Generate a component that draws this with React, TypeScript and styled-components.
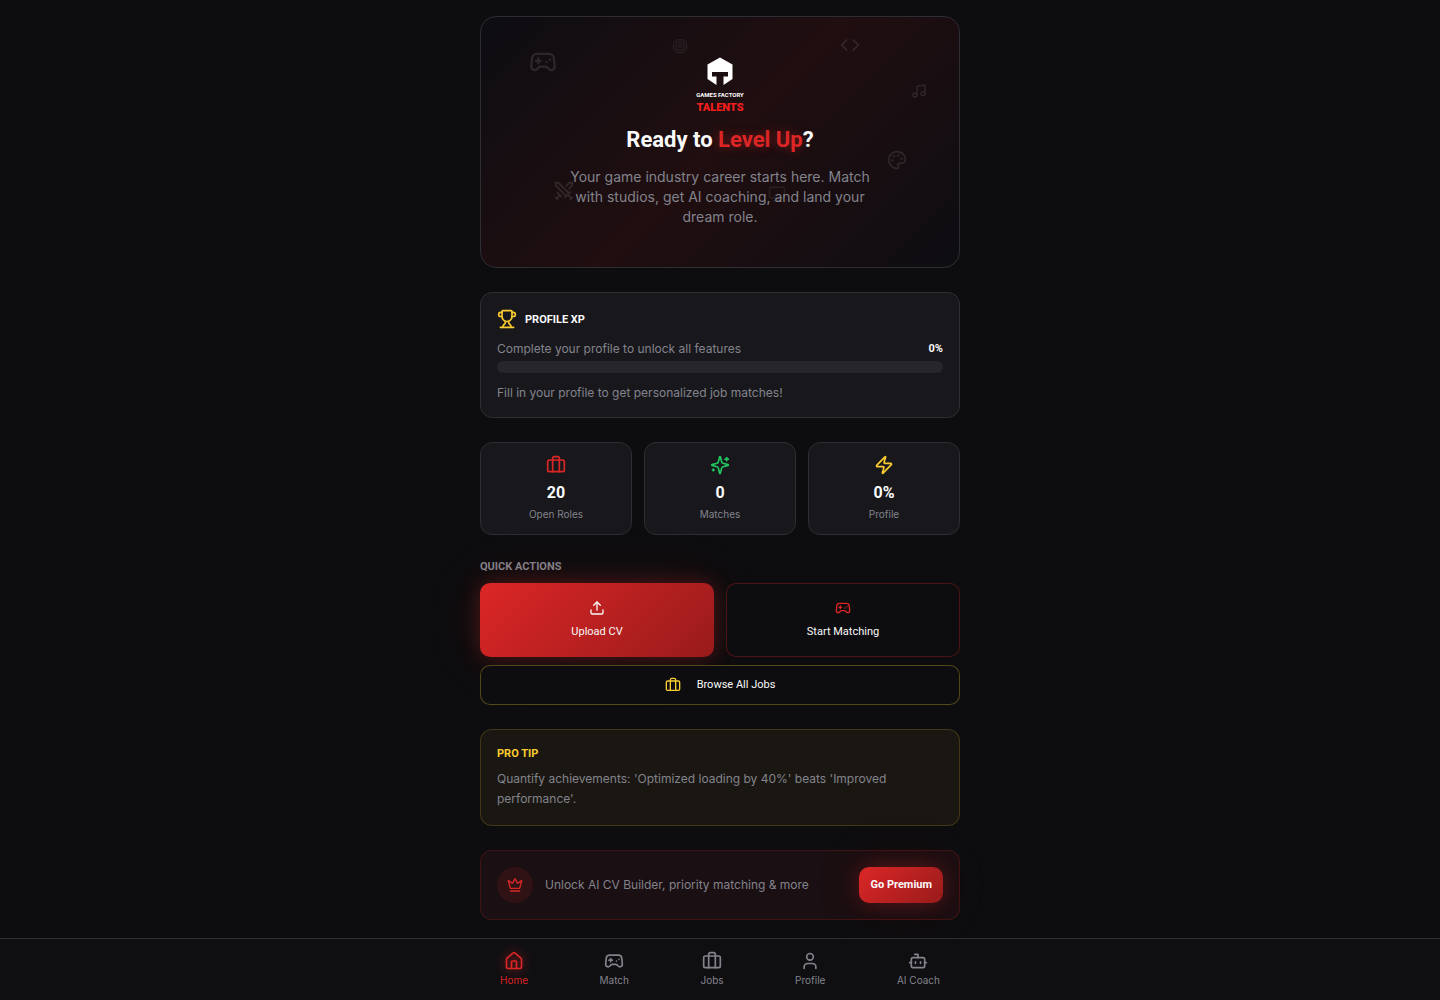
import React from "react";
import styled, { createGlobalStyle, css } from "styled-components";
import {
  Bot,
  Briefcase,
  Code,
  Crown,
  Gamepad2,
  House,
  Monitor,
  Music,
  Palette,
  Swords,
  Target,
  Trophy,
  Upload,
  User,
  Zap,
} from "lucide-react";

const color = {
  bg: "#0d0d0f",
  card: "#18181c",
  line: "#2d2d33",
  track: "#27272b",
  text: "#fafafa",
  muted: "#83838c",
  red: "#dc2626",
  redDark: "#991b1b",
  gold: "#facc30",
  green: "#22c55e",
};

const display = css`
  font-family: Roboto, "Liberation Sans", sans-serif;
`;

const GlobalStyle = createGlobalStyle`
  *, *::before, *::after { box-sizing: border-box; }
  body {
    margin: 0;
    background: ${color.bg};
    color: ${color.text};
    font-family: Inter, "Liberation Sans", sans-serif;
    font-size: 12px;
    line-height: 16px;
  }
  h1, h2, p { margin: 0; }
  button { font: inherit; color: inherit; cursor: pointer; }
`;

const Page = styled.div`
  display: flex;
  flex-direction: column;
  min-height: 100vh;
`;

const Main = styled.main`
  flex: 1;
  display: flex;
  flex-direction: column;
  gap: 24px;
  width: 100%;
  max-width: 480px;
  margin: 0 auto;
  padding: 16px 0;
`;

const Hero = styled.section`
  position: relative;
  display: flex;
  flex-direction: column;
  align-items: center;
  gap: 12px;
  padding: 40px 24px;
  border: 1px solid ${color.line};
  border-radius: 16px;
  overflow: hidden;
  text-align: center;
  background: linear-gradient(135deg, #0d0d12 0%, #200e10 50%, #0d0d12 100%);
`;

const Floating = styled.span<{ $x: string; $y: string; $faint?: boolean }>`
  position: absolute;
  left: ${(p) => p.$x};
  top: ${(p) => p.$y};
  display: flex;
  color: #fff;
  opacity: ${(p) => (p.$faint ? 0.07 : 0.1)};
`;

const Logo = styled.svg`
  position: relative;
  width: 56px;
  height: 56px;
`;

const HeroTitle = styled.h1`
  ${display}
  position: relative;
  font-size: 22px;
  line-height: 30px;
  font-weight: 700;
`;

const Glow = styled.span`
  color: ${color.red};
  text-shadow: 0 0 10px rgba(220, 38, 38, 0.5);
`;

const HeroText = styled.p`
  position: relative;
  max-width: 320px;
  font-size: 14px;
  line-height: 20px;
  color: ${color.muted};
`;

const Card = styled.section`
  padding: 16px;
  border: 1px solid ${color.line};
  border-radius: 12px;
  background: ${color.card};
`;

const CardHeader = styled.div`
  display: flex;
  align-items: center;
  gap: 8px;
  margin-bottom: 12px;
  color: ${color.gold};
`;

const CardTitle = styled.h2<{ $gold?: boolean }>`
  ${display}
  font-size: 11px;
  line-height: 15px;
  font-weight: 700;
  text-transform: uppercase;
  color: ${(p) => (p.$gold ? color.gold : color.text)};
`;

const Muted = styled.p`
  color: ${color.muted};
`;

const ProgressRow = styled.div`
  display: flex;
  justify-content: space-between;
  margin-bottom: 4px;
`;

const Percent = styled.span`
  ${display}
  font-size: 11px;
  font-weight: 700;
`;

const Track = styled.div`
  height: 12px;
  margin-bottom: 12px;
  border-radius: 6px;
  overflow: hidden;
  background: ${color.track};
`;

const Fill = styled.div`
  height: 100%;
  background: ${color.red};
`;

const Stats = styled.section`
  display: grid;
  grid-template-columns: repeat(3, 1fr);
  gap: 12px;
`;

const Stat = styled.div<{ $color: string }>`
  display: flex;
  flex-direction: column;
  align-items: center;
  padding: 12px;
  border: 1px solid ${color.line};
  border-radius: 12px;
  background: ${color.card};
  svg { color: ${(p) => p.$color}; }
`;

const StatValue = styled.strong`
  ${display}
  margin-top: 4px;
  font-size: 16px;
  line-height: 28px;
  font-weight: 700;
`;

const StatLabel = styled.span`
  font-size: 10px;
  line-height: 15px;
  color: ${color.muted};
`;

const Actions = styled.section`
  display: flex;
  flex-direction: column;
  gap: 8px;
`;

const SectionTitle = styled.h2`
  ${display}
  font-size: 11px;
  line-height: 16px;
  font-weight: 700;
  text-transform: uppercase;
  color: ${color.muted};
`;

const ActionGrid = styled.div`
  display: grid;
  grid-template-columns: repeat(2, 1fr);
  gap: 12px;
`;

const ActionButton = styled.button<{ $kind: "primary" | "red" | "gold" }>`
  ${display}
  display: flex;
  flex-direction: ${(p) => (p.$kind === "gold" ? "row" : "column")};
  align-items: center;
  justify-content: center;
  gap: ${(p) => (p.$kind === "gold" ? 16 : 8)}px;
  padding: ${(p) => (p.$kind === "gold" ? "11px 16px" : "16px")};
  border: 1px solid transparent;
  border-radius: 10px;
  font-size: 11px;
  line-height: 16px;
  font-weight: 400;
  background: ${color.bg};
  ${(p) =>
    p.$kind === "primary" &&
    css`
      background: linear-gradient(135deg, ${color.red}, ${color.redDark}) border-box;
      box-shadow: 0 0 20px rgba(220, 38, 38, 0.3), 0 0 60px rgba(220, 38, 38, 0.1);
    `}
  ${(p) =>
    p.$kind === "red" &&
    css`
      border-color: rgba(220, 38, 38, 0.3);
      svg { color: ${color.red}; }
    `}
  ${(p) =>
    p.$kind === "gold" &&
    css`
      border-color: rgba(250, 204, 48, 0.3);
      svg { color: ${color.gold}; }
    `}
`;

const Tip = styled(Card)`
  display: flex;
  flex-direction: column;
  gap: 8px;
  border-color: rgba(250, 204, 48, 0.18);
  background: #1a1712;
`;

const TipText = styled(Muted)`
  line-height: 20px;
`;

const Premium = styled(Card)`
  display: flex;
  align-items: center;
  gap: 12px;
  border-color: rgba(220, 38, 38, 0.2);
  background: #1a0f12;
`;

const CrownBadge = styled.span`
  display: flex;
  align-items: center;
  justify-content: center;
  width: 36px;
  height: 36px;
  border-radius: 50%;
  color: ${color.red};
  background: rgba(220, 38, 38, 0.12);
`;

const PremiumText = styled(Muted)`
  flex: 1;
`;

const PremiumButton = styled.button`
  ${display}
  height: 36px;
  padding: 0 11px;
  border: 0;
  border-radius: 10px;
  font-size: 11px;
  font-weight: 700;
  background: linear-gradient(135deg, ${color.red}, ${color.redDark});
  box-shadow: 0 0 20px rgba(220, 38, 38, 0.3), 0 0 60px rgba(220, 38, 38, 0.1);
`;

const NavBar = styled.nav`
  position: sticky;
  bottom: 0;
  border-top: 1px solid ${color.line};
  background: #0f0f12;
`;

const NavInner = styled.div`
  display: flex;
  justify-content: space-between;
  max-width: 480px;
  margin: 0 auto;
  padding: 0 8px;
`;

const NavLink = styled.a<{ $active?: boolean }>`
  display: flex;
  flex-direction: column;
  align-items: center;
  gap: 2px;
  padding: 12px;
  font-size: 10px;
  line-height: 15px;
  text-decoration: none;
  color: ${(p) => (p.$active ? color.red : color.muted)};
  svg {
    filter: ${(p) => (p.$active ? "drop-shadow(0 0 6px rgba(220, 38, 38, 0.8))" : "none")};
  }
`;

function Sparkles({ size }: { size: number }) {
  return (
    <svg
      width={size}
      height={size}
      viewBox="0 0 24 24"
      fill="none"
      stroke="currentColor"
      strokeWidth="2"
      strokeLinecap="round"
      strokeLinejoin="round"
      aria-hidden="true"
    >
      <path d="M9.937 15.500A2 2 0 0 0 8.500 14.063l-6.135-1.582a.5.5 0 0 1 0-.962L8.500 9.936A2 2 0 0 0 9.937 8.500l1.582-6.135a.5.5 0 0 1 .963 0L14.063 8.500A2 2 0 0 0 15.500 9.937l6.135 1.581a.5.5 0 0 1 0 .964L15.500 14.063a2 2 0 0 0-1.437 1.437l-1.582 6.135a.5.5 0 0 1-.963 0z" />
      <path d="M20 3v4" />
      <path d="M22 5h-4" />
      <path d="M4 17v2" />
      <path d="M5 18H3" />
    </svg>
  );
}

const floating = [
  { Icon: Gamepad2, size: 28, x: "10%", y: "12.5%" },
  { Icon: Target, size: 16, x: "40%", y: "8.5%", faint: true },
  { Icon: Code, size: 20, x: "75%", y: "7%" },
  { Icon: Music, size: 16, x: "90%", y: "26.5%" },
  { Icon: Palette, size: 20, x: "85%", y: "53%" },
  { Icon: Swords, size: 22, x: "15%", y: "65%" },
  { Icon: Monitor, size: 18, x: "60%", y: "67%", faint: true },
];

const stats = [
  { Icon: Briefcase, value: "20", label: "Open Roles", color: color.red },
  { Icon: Sparkles, value: "0", label: "Matches", color: color.green },
  { Icon: Zap, value: "0%", label: "Profile", color: color.gold },
];

const links = [
  { Icon: House, label: "Home", active: true },
  { Icon: Gamepad2, label: "Match" },
  { Icon: Briefcase, label: "Jobs" },
  { Icon: User, label: "Profile" },
  { Icon: Bot, label: "AI Coach" },
];

const progress = 0;

export default function App() {
  return (
    <Page>
      <GlobalStyle />
      <Main>
        <Hero>
          {floating.map(({ Icon, size, x, y, faint }) => (
            <Floating key={x} $x={x} $y={y} $faint={faint} aria-hidden="true">
              <Icon size={size} />
            </Floating>
          ))}
          <Logo viewBox="0 0 56 56" role="img" aria-label="Games Factory Talents">
            <path
              d="M28 0.500 40.500 7.500V22L31.500 28V19.500H36V15H20V19.500H24.500V28L15.500 22V7.500Z"
              fill="#fff"
            />
            <text x="28" y="40" textAnchor="middle" fontFamily="Roboto, sans-serif" fontWeight="700" fontSize="6" fill="#fff">
              GAMES FACTORY
            </text>
            <text x="28" y="54" textAnchor="middle" fontFamily="Roboto, sans-serif" fontWeight="900" fontSize="11" fill="#f21d1d">
              TALENTS
            </text>
          </Logo>
          <HeroTitle>
            Ready to <Glow>Level Up</Glow>?
          </HeroTitle>
          <HeroText>
            Your game industry career starts here. Match with studios, get AI coaching, and land your dream role.
          </HeroText>
        </Hero>

        <Card>
          <CardHeader>
            <Trophy size={20} />
            <CardTitle>Profile XP</CardTitle>
          </CardHeader>
          <ProgressRow>
            <Muted>Complete your profile to unlock all features</Muted>
            <Percent>{progress}%</Percent>
          </ProgressRow>
          <Track role="progressbar" aria-label="Profile XP" aria-valuenow={progress} aria-valuemin={0} aria-valuemax={100}>
            <Fill style={{ width: `${progress}%` }} />
          </Track>
          <Muted>Fill in your profile to get personalized job matches!</Muted>
        </Card>

        <Stats>
          {stats.map(({ Icon, value, label, color: tint }) => (
            <Stat key={label} $color={tint}>
              <Icon size={20} />
              <StatValue>{value}</StatValue>
              <StatLabel>{label}</StatLabel>
            </Stat>
          ))}
        </Stats>

        <Actions>
          <SectionTitle>Quick Actions</SectionTitle>
          <ActionGrid>
            <ActionButton type="button" $kind="primary">
              <Upload size={16} />
              Upload CV
            </ActionButton>
            <ActionButton type="button" $kind="red">
              <Gamepad2 size={16} />
              Start Matching
            </ActionButton>
          </ActionGrid>
          <ActionButton type="button" $kind="gold">
            <Briefcase size={16} />
            Browse All Jobs
          </ActionButton>
        </Actions>

        <Tip>
          <CardTitle $gold>Pro Tip</CardTitle>
          <TipText>Quantify achievements: 'Optimized loading by 40%' beats 'Improved performance'.</TipText>
        </Tip>

        <Premium>
          <CrownBadge>
            <Crown size={16} />
          </CrownBadge>
          <PremiumText>Unlock AI CV Builder, priority matching &amp; more</PremiumText>
          <PremiumButton type="button">Go Premium</PremiumButton>
        </Premium>
      </Main>

      <NavBar aria-label="Main">
        <NavInner>
          {links.map(({ Icon, label, active }) => (
            <NavLink key={label} href="#" $active={active} aria-current={active ? "page" : undefined}>
              <Icon size={20} />
              {label}
            </NavLink>
          ))}
        </NavInner>
      </NavBar>
    </Page>
  );
}
